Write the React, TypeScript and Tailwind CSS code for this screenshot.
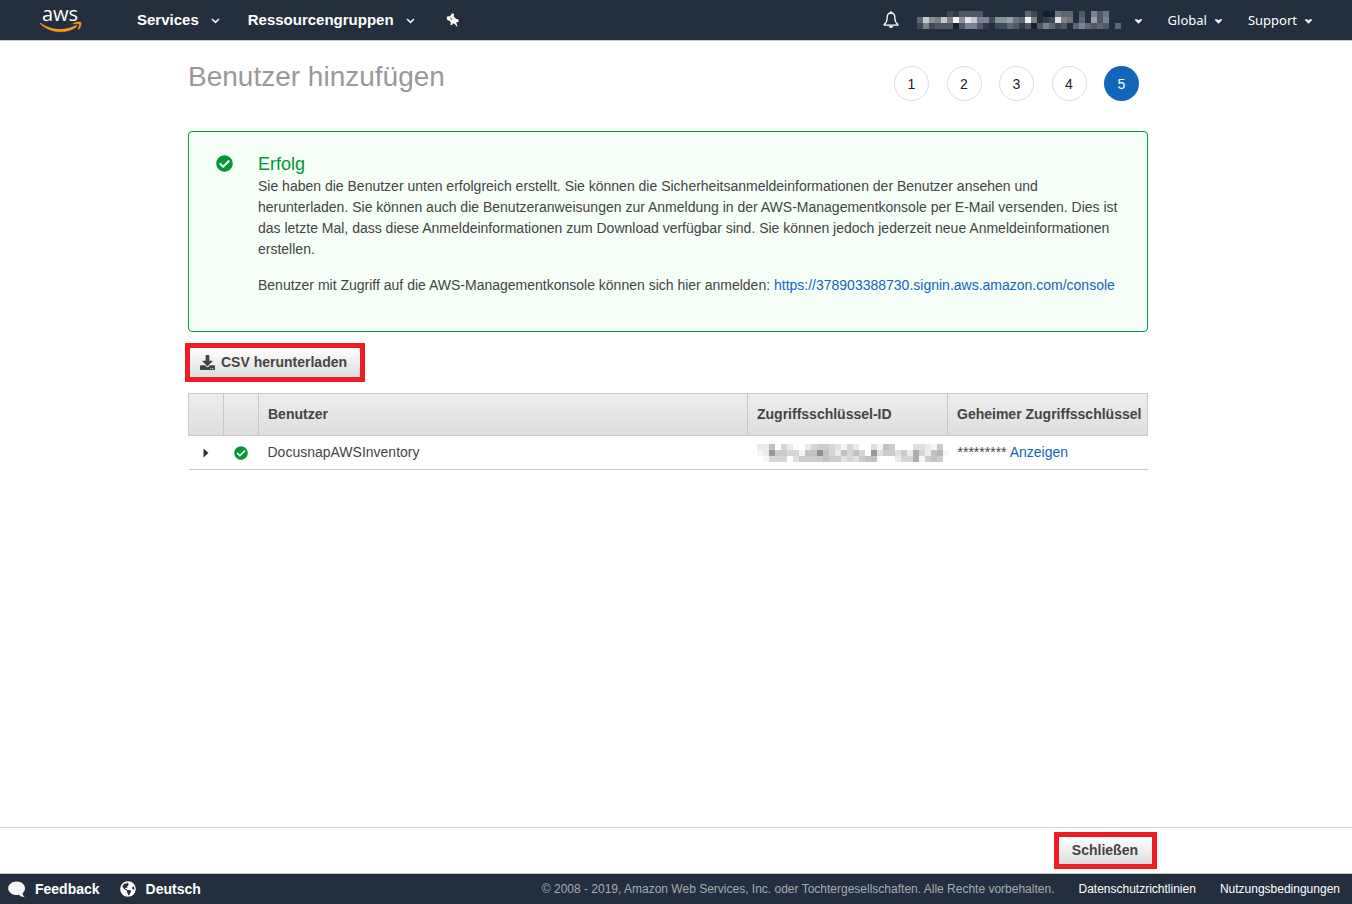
import type { ReactNode } from "react";

import { FaCheckCircle, FaDownload, FaGlobeAmericas } from "react-icons/fa";

const ARIAL = "font-['Liberation_Sans',Arial,sans-serif]";

// One hex digit per 6px cell, "." leaves the cell empty, "x" is darker than the bar.
const ACCOUNT_ROWS = [
  ".....213333.......42.xx544.3.635..",
  "4b76b6e7db66277854e6.12d65.4.836..",
  "262333x36631.224313x36423.464343.4",
];

const KEY_ROWS = [
  "226.42..245543142..3165...33215.",
  "12a5544166b6426464.a355352842671",
  ".1444.35555655343566...24481565.",
];

function Mosaic({
  rows,
  strength,
  className,
}: {
  rows: string[];
  strength: number;
  className: string;
}) {
  const cols = Math.max(...rows.map((r) => r.length));
  return (
    <svg
      width={cols * 6}
      height={rows.length * 6}
      className={className}
      shapeRendering="crispEdges"
      aria-hidden="true"
    >
      {rows.flatMap((row, y) =>
        row.split("").map((c, x) =>
          c === "." ? null : (
            <rect
              key={`${x}-${y}`}
              x={x * 6}
              y={y * 6}
              width={6}
              height={6}
              fill={c === "x" ? "#171e2c" : "currentColor"}
              fillOpacity={c === "x" ? 1 : parseInt(c, 16) * strength}
            />
          ),
        ),
      )}
    </svg>
  );
}

function AwsLogo() {
  return (
    <svg
      width="44"
      height="40"
      viewBox="0 0 44 40"
      className="overflow-visible"
      aria-label="aws"
    >
      <text
        x="21"
        y="21"
        textAnchor="middle"
        fill="#fff"
        className="font-['Open_Sans',sans-serif] text-[20px] font-medium"
      >
        aws
      </text>
      <path
        d="M1.800 23.200c5.600 4.100 12.200 6.100 19.400 6.100 5.500 0 11.200-1.400 15.600-3.700.9-.4 1.600.5.8 1.200-4.300 3.300-10.500 5-16 5C14 31.800 7 28.900 1.400 23.900c-.5-.5-.1-1 .4-.7z"
        fill="#ff9b1a"
        stroke="#ff9b1a"
        strokeWidth=".4"
      />
      <path
        d="M34.400 23.300c2.200-1.500 7-1.600 7.500-.9.600.8-.2 5.200-2.200 7-.4.300-.8.100-.6-.4.600-1.400 1.700-4.200 1.200-4.800-.5-.6-3.700-.4-5.400-.2-.600.1-.9-.4-.5-.7z"
        fill="#ff9b1a"
        stroke="#ff9b1a"
        strokeWidth=".4"
      />
    </svg>
  );
}

function Chevron() {
  return (
    <svg width="9" height="6" viewBox="0 0 9 6" className="mt-[2px]" aria-hidden="true">
      <path d="M1 1l3.500 3.300L8 1" fill="none" stroke="#eee" strokeWidth="1.700" />
    </svg>
  );
}

function Caret() {
  return (
    <svg width="7" height="5" viewBox="0 0 7 5" className="mt-[2px]" aria-hidden="true">
      <path d="M0 .3h2l1.500.9L5 .3h2v1L3.500 4.700 0 1.300z" fill="#eee" />
    </svg>
  );
}

function PinIcon() {
  return (
    <svg width="14" height="14" viewBox="0 0 14 14" aria-hidden="true">
      <path
        d="M5.800.3l1.800.4.500 1-.4 1.500 2.400 2.900 1.900.2.900 1.400-.2.900-2.500.8 1.300 4-.7.2-2.800-3.300-2.700 2-.9-.5.400-2.400L3.600 7.700l-1.700-.2-.9-1.200L.7 4l1.400-.7 1.300.1L5 2z"
        fill="#fff"
      />
      <path d="M4.500 4.500l1.300 2.600" stroke="#232f3e" strokeWidth=".7" />
    </svg>
  );
}

function BellIcon() {
  return (
    <svg width="16" height="18" viewBox="0 0 16 18" aria-hidden="true">
      <path
        d="M8 2C5.300 2 4.200 3.900 4.200 6c0 4-.8 5.800-3 7.400v.7h13.600v-.7c-2.200-1.600-3-3.400-3-7.400 0-2.100-1.100-4-3.800-4z"
        fill="none"
        stroke="#fff"
        strokeWidth="1.300"
        strokeLinejoin="round"
      />
      <path d="M7 .6h2v1.600H7zM5.800 15h4.400c-.2 1.300-1 2-2.200 2s-2-.7-2.200-2z" fill="#fff" />
    </svg>
  );
}

function SpeechIcon() {
  return (
    <svg width="18" height="17" viewBox="0 0 18 17" aria-hidden="true">
      <path
        d="M8.700.5C13.400.5 17 3.400 17 7.300c0 2-.9 3.800-2.500 5 .2 1.500.9 2.700 2.200 3.700-2.300.1-4.300-.7-5.700-2.200-.7.200-1.500.3-2.300.3C4 14.100.2 11.200.2 7.300S4 .5 8.700.5z"
        fill="#f5f5f5"
      />
    </svg>
  );
}

function NavButton({ children }: { children: ReactNode }) {
  return (
    <button
      type="button"
      className="flex items-center gap-3 text-[15px] leading-5 font-bold text-white"
    >
      {children}
      <Chevron />
    </button>
  );
}

function SmallNavButton({ children, label }: { children: ReactNode; label?: string }) {
  return (
    <button
      type="button"
      aria-label={label}
      className="flex items-center gap-2 font-['Noto_Sans',sans-serif] text-[13px] leading-5 text-white"
    >
      {children}
      <Caret />
    </button>
  );
}

function Header() {
  return (
    <header className="flex h-[41px] items-center justify-between border-b border-[#c8c8c8] bg-[#232f3e] pr-10 pl-[39px]">
      <nav className="flex items-center">
        <a href="#home" className="mr-[54px]">
          <AwsLogo />
        </a>
        <div className="flex items-center gap-7">
          <NavButton>Services</NavButton>
          <NavButton>Ressourcengruppen</NavButton>
          <button type="button" aria-label="Verknüpfungen" className="ml-[3px]">
            <PinIcon />
          </button>
        </div>
      </nav>
      <div className="flex items-center gap-[26px]">
        <div className="flex items-center gap-[18px]">
          <button type="button" aria-label="Benachrichtigungen">
            <BellIcon />
          </button>
          <SmallNavButton label="Konto">
            <Mosaic rows={ACCOUNT_ROWS} strength={1 / 15} className="mr-1.5 text-white" />
          </SmallNavButton>
        </div>
        <SmallNavButton>Global</SmallNavButton>
        <SmallNavButton>Support</SmallNavButton>
      </div>
    </header>
  );
}

function Steps({ current }: { current: number }) {
  return (
    <ol className="mt-[3px] mr-[9px] flex w-[245px] justify-between">
      {[1, 2, 3, 4, 5].map((n) => (
        <li
          key={n}
          className={
            n === current
              ? "flex size-[35px] items-center justify-center rounded-full bg-[#1166bb] text-sm text-white"
              : "flex size-[35px] items-center justify-center rounded-full border border-[#ddd] text-sm text-[#222]"
          }
        >
          {n}
        </li>
      ))}
    </ol>
  );
}

function SuccessBox() {
  return (
    <section className="mt-[30px] flex rounded border border-[#009933] bg-[#f6fef8] pt-[21px] pr-6 pb-[35px] pl-[27px]">
      <FaCheckCircle className="mt-[2px] size-[17px] shrink-0 text-[#009933]" />
      <div className="ml-[25px] leading-[21px]">
        <h2 className="text-lg leading-[22px] text-[#009933]">Erfolg</h2>
        <p className="mt-[1px]">
          Sie haben die Benutzer unten erfolgreich erstellt. Sie können die
          Sicherheitsanmeldeinformationen der Benutzer ansehen und herunterladen. Sie können auch
          die Benutzeranweisungen zur Anmeldung in der AWS-Managementkonsole per E-Mail versenden.
          Dies ist das letzte Mal, dass diese Anmeldeinformationen zum Download verfügbar sind. Sie
          können jedoch jederzeit neue Anmeldeinformationen erstellen.
        </p>
        <p className="mt-[15px]">
          Benutzer mit Zugriff auf die AWS-Managementkonsole können sich hier anmelden:{" "}
          <a href="#console" className="text-[#1166bb]">
            https://378903388730.signin.aws.amazon.com/console
          </a>
        </p>
      </div>
    </section>
  );
}

function UserTable() {
  return (
    <table className="mt-[11px] w-full table-fixed border-collapse text-left">
      <colgroup>
        <col className="w-[35px]" />
        <col className="w-[35px]" />
        <col />
        <col className="w-[200px]" />
        <col className="w-[200px]" />
      </colgroup>
      <thead>
        <tr className="h-[42px] bg-linear-to-b from-[#eee] to-[#ddd]">
          <th className="border border-[#c8c8c8]" aria-label="Details" />
          <th className="border border-[#c8c8c8]" aria-label="Status" />
          <th className="border border-[#c8c8c8] px-[9px] pb-[1px]">Benutzer</th>
          <th className="border border-[#c8c8c8] px-[9px] pb-[1px]">Zugriffsschlüssel-ID</th>
          <th className="border border-[#c8c8c8] pb-[1px] pl-[9px] whitespace-nowrap">
            Geheimer Zugriffsschlüssel
          </th>
        </tr>
      </thead>
      <tbody>
        <tr className="h-[34px] border-b border-[#c8c8c8]">
          <td>
            <button type="button" aria-label="Details anzeigen" className="mx-auto block">
              <svg width="6" height="10" viewBox="0 0 6 10" aria-hidden="true">
                <path d="M.5.500L5.500 5 .5 9.500z" fill="#333" />
              </svg>
            </button>
          </td>
          <td>
            <FaCheckCircle className="mx-auto size-[14px] text-[#009933]" />
          </td>
          <td className="px-[9px] pb-[1px]">DocusnapAWSInventory</td>
          <td className="px-[9px]">
            <Mosaic rows={KEY_ROWS} strength={0.04} className="text-black" />
          </td>
          <td className="pb-[1px] pl-[10px]">
            *********{" "}
            <a href="#show" className="text-[#1166bb]">
              Anzeigen
            </a>
          </td>
        </tr>
      </tbody>
    </table>
  );
}

function Footer() {
  return (
    <footer className="flex h-[31px] items-center justify-between border-t border-[#c8c8c8] bg-[#232f3e] pr-3 pl-2 text-xs text-white">
      <div className="flex items-center gap-5 text-sm font-bold">
        <button type="button" className="flex items-center gap-[9px]">
          <SpeechIcon />
          Feedback
        </button>
        <button type="button" className="flex items-center gap-[10px]">
          <FaGlobeAmericas className="size-4" />
          Deutsch
        </button>
      </div>
      <div className="flex items-center gap-6">
        <span className="text-[#aaa]">
          © 2008 - 2019, Amazon Web Services, Inc. oder Tochtergesellschaften. Alle Rechte
          vorbehalten.
        </span>
        <a href="#privacy">Datenschutzrichtlinien</a>
        <a href="#terms">Nutzungsbedingungen</a>
      </div>
    </footer>
  );
}

export default function App() {
  return (
    <div className={`flex min-h-screen flex-col bg-white text-sm text-[#444] ${ARIAL}`}>
      <Header />
      <main className="flex-1 pr-4">
        <div className="mx-auto max-w-[960px] pt-[22px]">
          <div className="flex items-start justify-between">
            <h1 className="text-[28px] leading-7 text-[#999]">Benutzer hinzufügen</h1>
            <Steps current={5} />
          </div>
          <SuccessBox />
          <button
            type="button"
            className="mt-[11px] -ml-[3px] flex h-[39px] items-center gap-1.5 border-5 border-[#ee1c25] bg-linear-to-b from-white to-[#ddd] px-[10px] pb-[1px] font-bold"
          >
            <FaDownload className="size-[15px]" />
            <span className="pr-[3px]">CSV herunterladen</span>
          </button>
          <UserTable />
        </div>
      </main>
      <div className="border-t border-[#d5d5d5] pr-4">
        <div className="mx-auto flex h-[45px] max-w-[960px] items-center justify-end">
          <button
            type="button"
            className="-mr-[9px] h-[37px] border-5 border-[#ee1c25] bg-linear-to-b from-white to-[#ddd] pr-[14px] pb-[2px] pl-[13px] font-bold"
          >
            Schließen
          </button>
        </div>
      </div>
      <Footer />
    </div>
  );
}
